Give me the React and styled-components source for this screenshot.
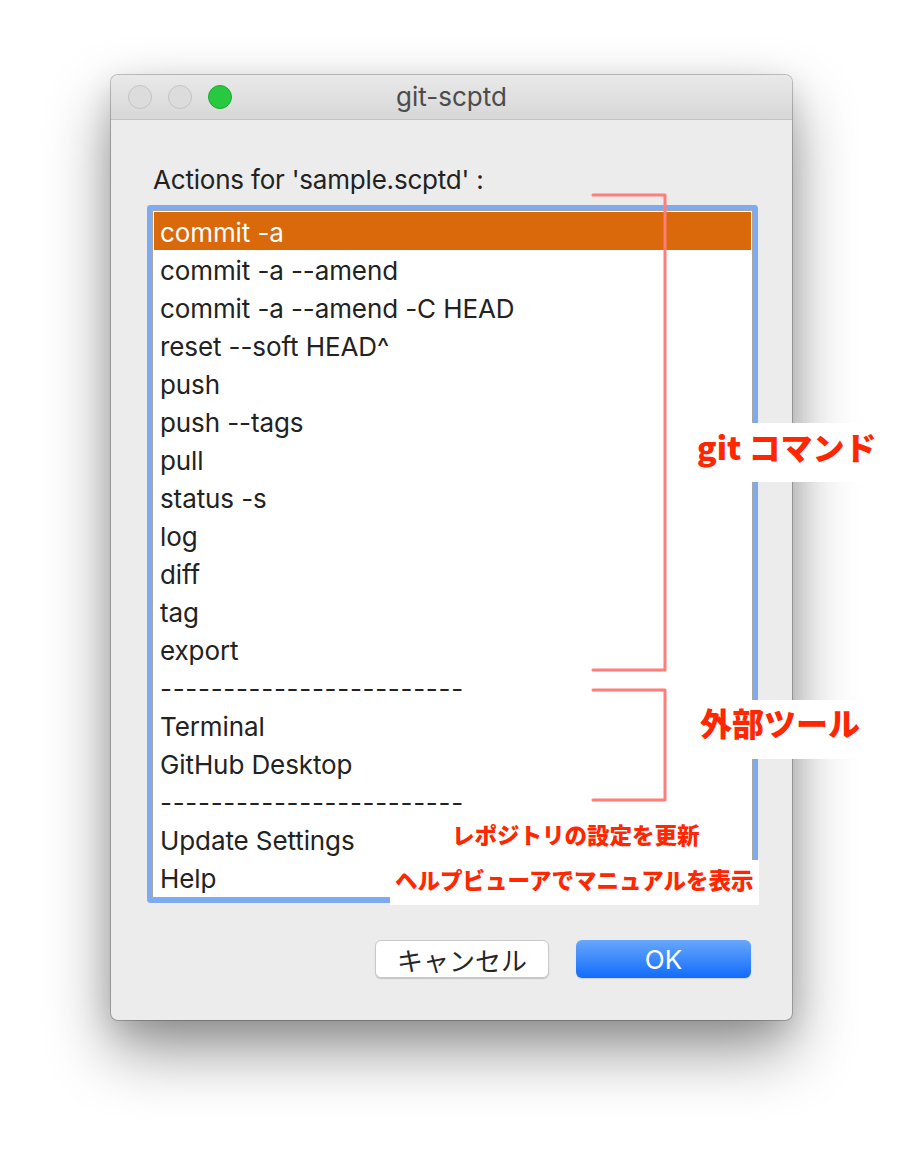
import React from "react";
import styled, { createGlobalStyle } from "styled-components";

const Global = createGlobalStyle`
  html, body { margin: 0; padding: 0; background: #ffffff; }
  body { font-family: "Inter", "Noto Sans CJK JP", sans-serif; }
`;

const Page = styled.div`
  min-height: 1168px;
  padding: 75px 0 0 111px;
  box-sizing: border-box;
`;

const Window = styled.div`
  position: relative;
  width: 681px;
  height: 945px;
  border-radius: 7px;
  background: #ececec;
  box-shadow: 0 0 0 1px rgba(0, 0, 0, 0.22), 0 30px 64px rgba(0, 0, 0, 0.42),
    0 10px 30px rgba(0, 0, 0, 0.12);
  display: flex;
  flex-direction: column;
`;

const TitleBar = styled.div`
  position: relative;
  height: 44px;
  border-bottom: 1px solid #c3c3c3;
  border-radius: 7px 7px 0 0;
  background: linear-gradient(to bottom, #e9e9e9, #d7d7d7);
  display: flex;
  align-items: center;
  justify-content: center;
`;

const Lights = styled.div`
  position: absolute;
  left: 17px;
  top: 10px;
  display: flex;
  gap: 16px;
`;

const Light = styled.span`
  width: 24px;
  height: 24px;
  box-sizing: border-box;
  border-radius: 50%;
  background: ${(p) => (p.$color === "green" ? "#28c840" : "#dcdcdc")};
  border: 1px solid ${(p) => (p.$color === "green" ? "#1eab2e" : "#c4c4c4")};
`;

const Title = styled.div`
  font-size: 26px;
  color: #4c4c4c;
  line-height: 30px;
`;

const Body = styled.div`
  flex: 1;
  display: flex;
  flex-direction: column;
  padding: 45px 40px 42px 41px;
`;

const Prompt = styled.div`
  font-size: 26px;
  line-height: 30px;
  color: #222;
  margin-left: 1px;
  letter-spacing: -0.2px;
`;

const ListFrame = styled.div`
  margin-top: 15px;
  width: 601px;
  box-sizing: border-box;
  border: 1px solid #a6a6a6;
  border-radius: 1px;
  padding: 1px;
  background: #fff;
  box-shadow: 0 0 0 5px #7eabef;
`;

const Row = styled.div`
  height: 38px;
  box-sizing: border-box;
  padding: 4px 0 0 6px;
  line-height: 34px;
  font-size: 26px;
  white-space: nowrap;
  color: ${(p) => (p.$selected ? "#fff" : "#222")};
  background: ${(p) => (p.$selected ? "#d9690a" : "transparent")};
  letter-spacing: ${(p) => (p.$dashes ? "0.7px" : "-0.1px")};
`;

const Buttons = styled.div`
  margin-top: 42px;
  display: flex;
  justify-content: flex-end;
  gap: 27px;
  padding-right: 1px;
`;

const Button = styled.div`
  width: ${(p) => (p.$primary ? "175px" : "174px")};
  height: 38px;
  box-sizing: border-box;
  border-radius: 6px;
  display: flex;
  align-items: center;
  justify-content: center;
  font-size: 26px;
  color: ${(p) => (p.$primary ? "#fff" : "#262626")};
  background: ${(p) =>
    p.$primary
      ? "linear-gradient(to bottom, #68a7fb, #116cfb)"
      : "#ffffff"};
  border: ${(p) => (p.$primary ? "none" : "1px solid #c9c9c9")};
  box-shadow: ${(p) =>
    p.$primary
      ? "0 1px 1px rgba(0,0,0,0.12)"
      : "0 1px 1px rgba(0,0,0,0.18)"};
`;

const Brackets = styled.svg`
  position: absolute;
  left: 0;
  top: 0;
  width: 681px;
  height: 945px;
  pointer-events: none;
  overflow: visible;
`;

const Callout = styled.div`
  position: absolute;
  left: ${(p) => p.$x}px;
  top: ${(p) => p.$y}px;
  padding: ${(p) => p.$pad || "0"};
  background: ${(p) => (p.$plain ? "transparent" : "#ffffff")};
  color: #ff2600;
  font-family: "Noto Sans CJK JP", sans-serif;
  font-weight: 900;
  font-size: ${(p) => p.$size}px;
  line-height: ${(p) => p.$lh}px;
  white-space: nowrap;
`;

const items = [
  "commit -a",
  "commit -a --amend",
  "commit -a --amend -C HEAD",
  "reset --soft HEAD^",
  "push",
  "push --tags",
  "pull",
  "status -s",
  "log",
  "diff",
  "tag",
  "export",
  "------------------------",
  "Terminal",
  "GitHub Desktop",
  "------------------------",
  "Update Settings",
  "Help",
];

export default function App() {
  return (
    <Page>
      <Global />
      <Window>
        <TitleBar>
          <Lights>
            <Light />
            <Light />
            <Light $color="green" />
          </Lights>
          <Title>git-scptd</Title>
        </TitleBar>
        <Body>
          <Prompt>Actions for 'sample.scptd' :</Prompt>
          <ListFrame>
            {items.map((t, i) => (
              <Row key={i} $selected={i === 0} $dashes={t.startsWith("---")}>
                {t}
              </Row>
            ))}
          </ListFrame>
          <Buttons>
            <Button>キャンセル</Button>
            <Button $primary>OK</Button>
          </Buttons>
        </Body>

        <Brackets viewBox="0 0 681 945">
          <path
            d="M482 120 H554 V595 H482"
            fill="none"
            stroke="#ff7e79"
            strokeWidth="3"
            strokeLinecap="round"
            strokeLinejoin="round"
          />
          <path
            d="M482 615 H554 V725 H482"
            fill="none"
            stroke="#ff7e79"
            strokeWidth="3"
            strokeLinecap="round"
            strokeLinejoin="round"
          />
        </Brackets>

        <Callout $x={577} $y={348} $size={32} $lh={44} $pad="1px 12px 14px 9px">
          git コマンド
        </Callout>
        <Callout $x={579} $y={625} $size={32} $lh={44} $pad="0px 8px 15px 10px">
          外部ツール
        </Callout>
        <Callout $x={341} $y={744} $size={22.5} $lh={30} $plain>
          レポジトリの設定を更新
        </Callout>
        <Callout $x={279} $y={785} $size={22.5} $lh={30} $pad="4px 6px 11px 5px">
          ヘルプビューアでマニュアルを表示
        </Callout>
      </Window>
    </Page>
  );
}
